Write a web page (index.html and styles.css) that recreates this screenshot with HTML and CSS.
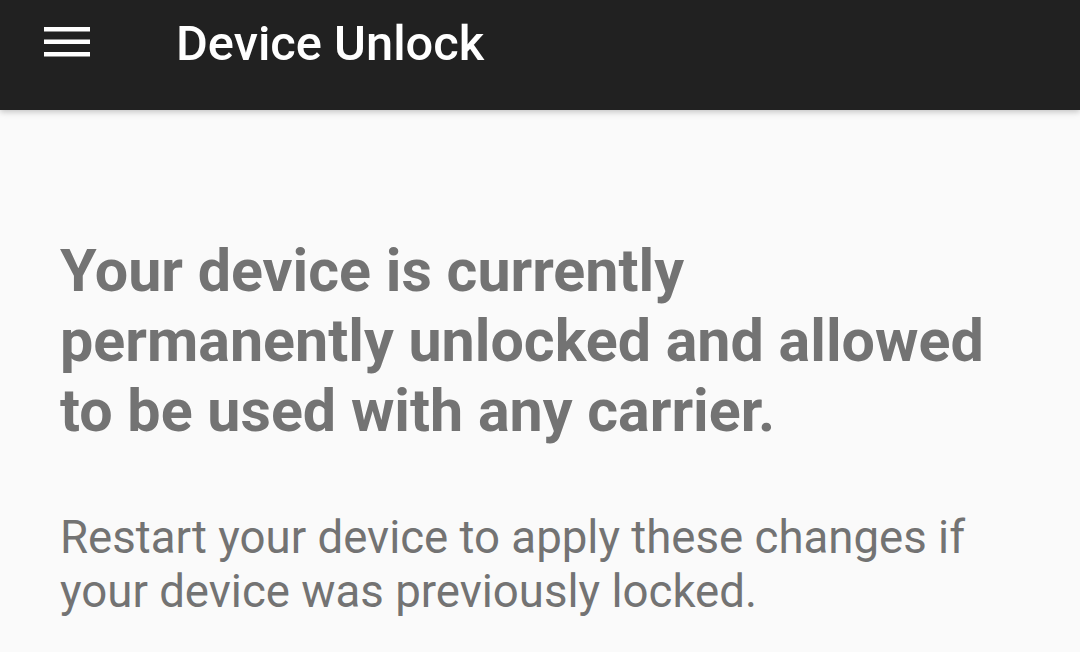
FILE: index.html
```html
<!DOCTYPE html>
<html lang="en">
<head>
<meta charset="utf-8">
<title>Device Unlock</title>
<link rel="stylesheet" href="styles.css">
</head>
<body>
<header class="appbar">
  <button class="menu" aria-label="Menu">
    <svg width="46" height="32" viewBox="0 0 46 32">
      <rect x="0" y="0" width="46" height="4.5" fill="#fff"/>
      <rect x="0" y="12.5" width="46" height="4.5" fill="#fff"/>
      <rect x="0" y="25" width="46" height="4.5" fill="#fff"/>
    </svg>
  </button>
  <h1 class="title">Device Unlock</h1>
</header>
<main class="content">
  <h2 class="status">Your device is currently permanently unlocked and allowed to be used with any carrier.</h2>
  <p class="note">Restart your device to apply these changes if your device was previously locked.</p>
</main>
</body>
</html>
```
FILE: styles.css
```css
html, body {
  margin: 0;
  padding: 0;
  background: #fafafa;
  font-family: Roboto, "Noto Sans", sans-serif;
  height: 100%;
  overflow: hidden;
}
.appbar {
  position: relative;
  z-index: 1;
  height: 110px;
  background: #212121;
  display: flex;
  align-items: center;
  box-shadow: 0 2px 6px rgba(0,0,0,0.22);
}
.menu {
  background: none;
  border: 0;
  padding: 0;
  margin: 0 0 0 44px;
  width: 46px;
  height: 32px;
  display: flex;
  margin-top: -24px;
}
.title {
  margin: 0 0 0 86px;
  color: #fff;
  font-weight: 500;
  font-size: 48.8px;
  line-height: 1;
  margin-top: -22px;
}
.content {
  padding: 126px 60px 0 60px;
}
.status {
  margin: 0;
  color: #737373;
  font-weight: 700;
  font-size: 59.2px;
  line-height: 70px;
}
.note {
  margin: 65px 0 0 0;
  color: #737373;
  font-weight: 400;
  font-size: 45.6px;
  line-height: 54px;
}
```
